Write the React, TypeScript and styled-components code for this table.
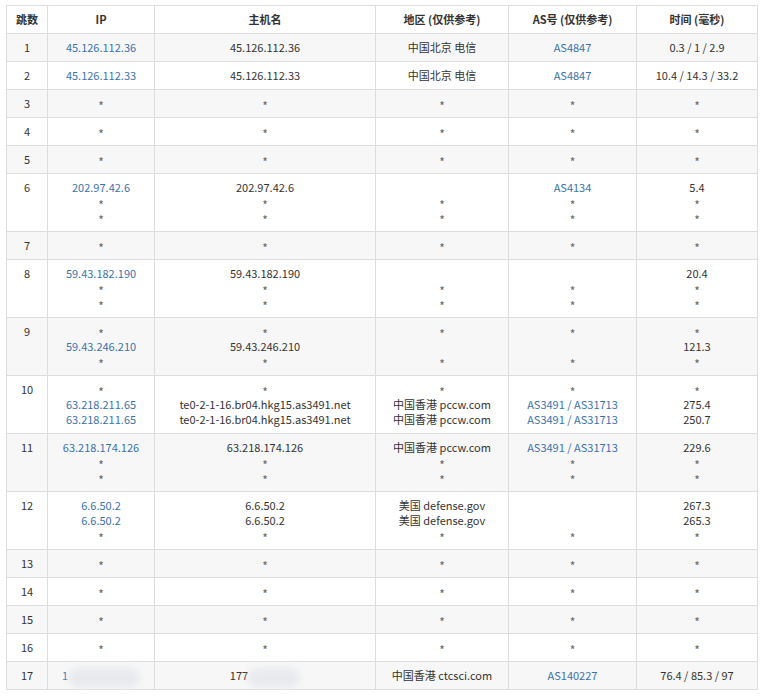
import React from "react";
import styled, { createGlobalStyle } from "styled-components";

const Global = createGlobalStyle`
  html, body { margin: 0; padding: 0; background: #fff; }
  body { font-family: "Noto Sans CJK SC", "Noto Sans", sans-serif; }
`;

const Page = styled.div`
  padding: 5px 0 0 6px;
`;

const Table = styled.table`
  border-collapse: collapse;
  width: 751px;
  table-layout: fixed;
  font-size: 11px;
  color: #333;
`;

const Th = styled.th`
  border: 1px solid #ddd;
  padding: 6px 4px;
  height: 15px;
  line-height: 15px;
  font-weight: bold;
  text-align: center;
  background: #fff;
`;

const Row = styled.tr<{ $striped: boolean }>`
  background: ${(p) => (p.$striped ? "#f7f7f7" : "#fff")};
`;

const Td = styled.td`
  border: 1px solid #ddd;
  padding: 6px 4px;
  line-height: 15px;
  text-align: center;
  vertical-align: top;
  white-space: nowrap;
`;

const Line = styled.div`
  height: 15px;
  line-height: 15px;
`;

const Star = styled.span`
  color: #666;
  font-size: 12px;
  line-height: 15px;
  display: inline-block;
  height: 15px;
  transform: translateY(2px);
`;

const Link = styled.a`
  color: #3a72ad;
  text-decoration: none;
`;

const Slash = styled.span`
  color: #3a72ad;
`;

const Blur = styled.span<{ $w: number }>`
  display: inline-block;
  width: ${(p) => p.$w}px;
  height: 20px;
  margin-bottom: -8px;
  vertical-align: baseline;
  background: #e8eaee;
  border-radius: 10px;
  filter: blur(3px);
`;

type Cell = string[];
type Hop = { n: number; ip: Cell; host: Cell; region: Cell; as: Cell; time: Cell };

const S = ["*"];
const star: Omit<Hop, "n"> = { ip: S, host: S, region: S, as: S, time: S };

const hops: Hop[] = [
  { n: 1, ip: ["45.126.112.36"], host: ["45.126.112.36"], region: ["中国北京 电信"], as: ["AS4847"], time: ["0.3 / 1 / 2.9"] },
  { n: 2, ip: ["45.126.112.33"], host: ["45.126.112.33"], region: ["中国北京 电信"], as: ["AS4847"], time: ["10.4 / 14.3 / 33.2"] },
  { n: 3, ...star },
  { n: 4, ...star },
  { n: 5, ...star },
  { n: 6, ip: ["202.97.42.6", "*", "*"], host: ["202.97.42.6", "*", "*"], region: ["", "*", "*"], as: ["AS4134", "*", "*"], time: ["5.4", "*", "*"] },
  { n: 7, ...star },
  { n: 8, ip: ["59.43.182.190", "*", "*"], host: ["59.43.182.190", "*", "*"], region: ["", "*", "*"], as: ["", "*", "*"], time: ["20.4", "*", "*"] },
  { n: 9, ip: ["*", "59.43.246.210", "*"], host: ["*", "59.43.246.210", "*"], region: ["*", "", "*"], as: ["*", "", "*"], time: ["*", "121.3", "*"] },
  { n: 10, ip: ["*", "63.218.211.65", "63.218.211.65"], host: ["*", "te0-2-1-16.br04.hkg15.as3491.net", "te0-2-1-16.br04.hkg15.as3491.net"], region: ["*", "中国香港 pccw.com", "中国香港 pccw.com"], as: ["*", "AS3491 / AS31713", "AS3491 / AS31713"], time: ["*", "275.4", "250.7"] },
  { n: 11, ip: ["63.218.174.126", "*", "*"], host: ["63.218.174.126", "*", "*"], region: ["中国香港 pccw.com", "*", "*"], as: ["AS3491 / AS31713", "*", "*"], time: ["229.6", "*", "*"] },
  { n: 12, ip: ["6.6.50.2", "6.6.50.2", "*"], host: ["6.6.50.2", "6.6.50.2", "*"], region: ["美国 defense.gov", "美国 defense.gov", "*"], as: ["", "", "*"], time: ["267.3", "265.3", "*"] },
  { n: 13, ...star },
  { n: 14, ...star },
  { n: 15, ...star },
  { n: 16, ...star },
];

function renderLine(text: string, kind: "link" | "as" | "plain", key: number) {
  if (text === "*") return <Line key={key}><Star>*</Star></Line>;
  if (text === "") return <Line key={key} />;
  if (kind === "link") return <Line key={key}><Link>{text}</Link></Line>;
  if (kind === "as") {
    const parts = text.split(" / ");
    return (
      <Line key={key}>
        {parts.map((p, i) => (
          <React.Fragment key={i}>
            {i > 0 && <Slash> / </Slash>}
            <Link>{p}</Link>
          </React.Fragment>
        ))}
      </Line>
    );
  }
  return <Line key={key}>{text}</Line>;
}

const CellLines = ({ lines, kind }: { lines: Cell; kind: "link" | "as" | "plain" }) => (
  <Td>{lines.map((l, i) => renderLine(l, kind, i))}</Td>
);

export default function App() {
  return (
    <Page>
      <Global />
      <Table>
        <colgroup>
          <col style={{ width: 41 }} />
          <col style={{ width: 107 }} />
          <col style={{ width: 221 }} />
          <col style={{ width: 133 }} />
          <col style={{ width: 128 }} />
          <col style={{ width: 121 }} />
        </colgroup>
        <thead>
          <tr>
            <Th>跳数</Th>
            <Th>IP</Th>
            <Th>主机名</Th>
            <Th>地区 (仅供参考)</Th>
            <Th>AS号 (仅供参考)</Th>
            <Th>时间 (毫秒)</Th>
          </tr>
        </thead>
        <tbody>
          {hops.map((h) => (
            <Row key={h.n} $striped={h.n % 2 === 1}>
              <Td>{h.n}</Td>
              <CellLines lines={h.ip} kind="link" />
              <CellLines lines={h.host} kind="plain" />
              <CellLines lines={h.region} kind="plain" />
              <CellLines lines={h.as} kind="as" />
              <CellLines lines={h.time} kind="plain" />
            </Row>
          ))}
          <Row $striped={true}>
            <Td>17</Td>
            <Td>
              <Line><Link>1</Link><Blur $w={72} /></Line>
            </Td>
            <Td>
              <Line>177<Blur $w={52} /></Line>
            </Td>
            <Td><Line>中国香港 ctcsci.com</Line></Td>
            <Td><Line><Link>AS140227</Link></Line></Td>
            <Td><Line>76.4 / 85.3 / 97</Line></Td>
          </Row>
        </tbody>
      </Table>
    </Page>
  );
}
